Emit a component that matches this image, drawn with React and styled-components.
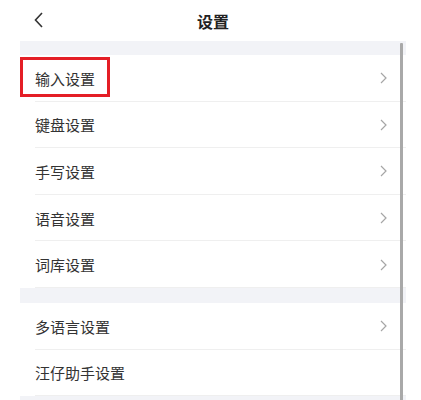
import React from 'react';
import styled, { createGlobalStyle } from 'styled-components';

const Global = createGlobalStyle`
  html, body {
    margin: 0;
    padding: 0;
    background: #fff;
    font-family: "Noto Sans CJK SC", "Noto Sans", sans-serif;
  }
`;

const Page = styled.div`
  width: 421px;
  height: 400px;
  overflow: hidden;
  background: #fff;
`;

const Panel = styled.div`
  position: relative;
  margin-left: 20px;
  width: 386px;
`;

const Header = styled.header`
  height: 41px;
  display: flex;
  align-items: center;
  justify-content: center;
  position: relative;
`;

const Back = styled.svg`
  position: absolute;
  left: 14px;
  top: 12px;
`;

const Title = styled.h1`
  margin: 0;
  font-size: 16px;
  font-weight: 700;
  color: #222;
  line-height: 1;
`;

const Gap = styled.div`
  height: ${(p) => p.h}px;
  background: #f2f3f7;
`;

const Row = styled.div`
  position: relative;
  height: 46.6px;
  display: flex;
  align-items: center;
  padding-left: 15px;
  padding-right: 19px;
  box-sizing: border-box;
  &:not(:last-child)::after {
    content: '';
    position: absolute;
    left: 15px;
    right: 0;
    bottom: 0;
    height: 1px;
    background: #efefef;
  }
`;

const Label = styled.span`
  flex: 1;
  font-size: 15px;
  color: #333;
`;

const Marker = styled.div`
  position: absolute;
  left: 0;
  top: 2px;
  width: 90px;
  height: 40px;
  box-sizing: border-box;
  border: 3px solid #e41e26;
`;

const Scrollbar = styled.div`
  position: absolute;
  left: 380px;
  top: 43px;
  width: 3px;
  height: 400px;
  background: #a9a9a9;
  border-radius: 1px;
`;

const Chevron = () => (
  <svg width="7" height="12" viewBox="0 0 7 12">
    <path d="M1 1 L6 6 L1 11" fill="none" stroke="#a6a6a6" strokeWidth="1.2" />
  </svg>
);

const groups = [
  [
    { label: '输入设置', marked: true },
    { label: '键盘设置' },
    { label: '手写设置' },
    { label: '语音设置' },
    { label: '词库设置' },
  ],
  [{ label: '多语言设置' }, { label: '汪仔助手设置', noArrow: true }],
];

export default function App() {
  return (
    <Page>
      <Global />
      <Panel>
        <Header>
          <Back width="10" height="16" viewBox="0 0 10 16">
            <path d="M8 1 L1.5 8 L8 15" fill="none" stroke="#333" strokeWidth="1.6" />
          </Back>
          <Title>设置</Title>
        </Header>
        {groups.map((g, i) => (
          <React.Fragment key={i}>
            <Gap h={i === 0 ? 14 : 15} />
            {g.map((item) => (
              <Row key={item.label}>
                {item.marked && <Marker />}
                <Label>{item.label}</Label>
                {!item.noArrow && <Chevron />}
              </Row>
            ))}
          </React.Fragment>
        ))}
        <Gap h={10} />
        <Scrollbar />
      </Panel>
    </Page>
  );
}
